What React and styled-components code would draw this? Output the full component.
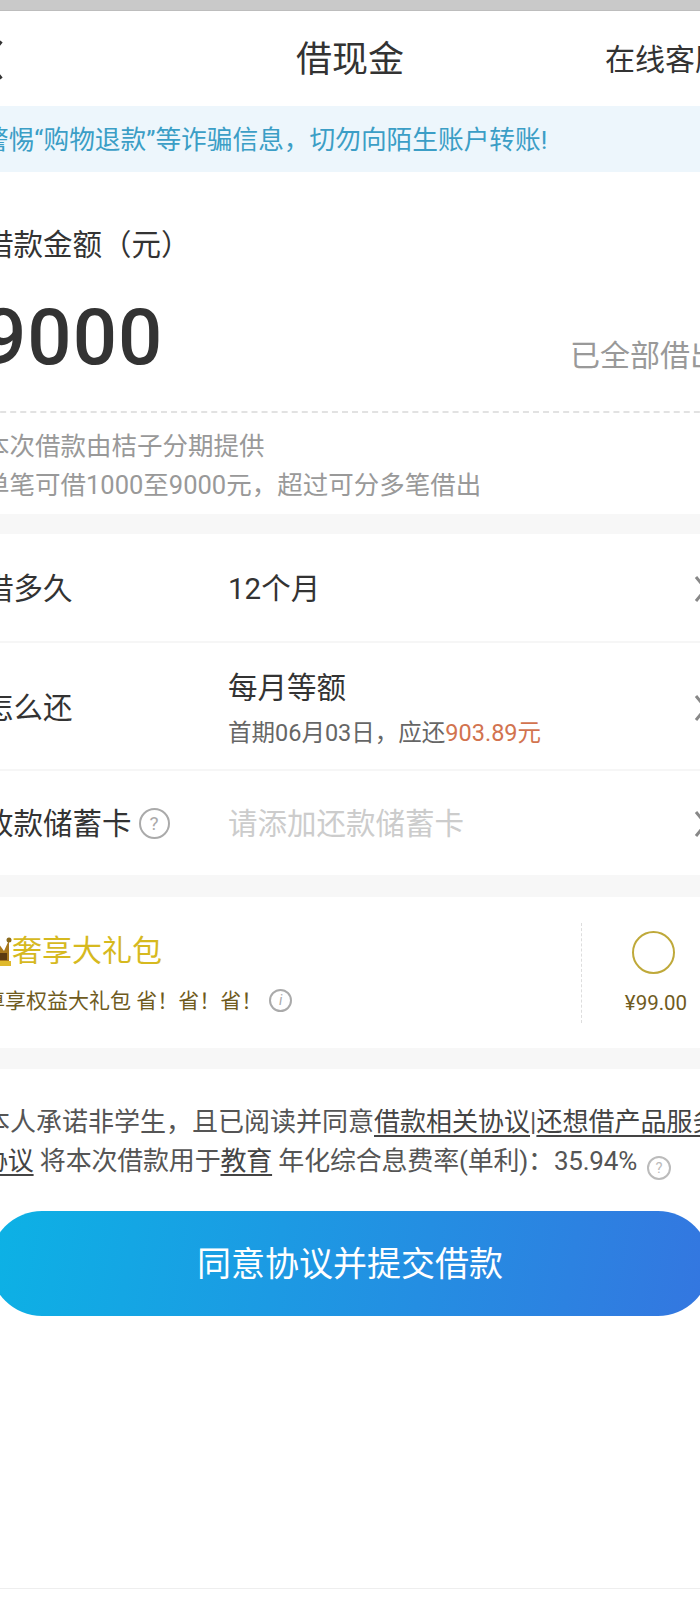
import React from 'react';
import styled, { createGlobalStyle } from 'styled-components';

const GlobalStyle = createGlobalStyle`
    html, body {
        margin: 0;
        padding: 0;
        background: #fff;
        overflow: hidden;
    }
    body {
        font-family: Roboto, "Noto Sans CJK SC", sans-serif;
        color: #333;
    }
`;

const Viewport = styled.div`
    width: 700px;
    height: 1603px;
    overflow: hidden;
`;

const Page = styled.div`
    width: 760px;
    margin-left: -30px;
`;

const StatusBar = styled.div`
    height: 10px;
    background: #c9c9c9;
    border-bottom: 1px solid #bdbdbd;
`;

const Nav = styled.div`
    display: grid;
    grid-template-columns: 1fr auto 1fr;
    align-items: center;
    height: 95px;
    padding: 2px 5px 0;
    box-sizing: border-box;
`;

const BackIcon = styled.svg`
    display: block;
    width: 19px;
    height: 40px;
    margin-left: 9px;
`;

const Title = styled.div`
    font-size: 36px;
    line-height: 50px;
    color: #333;
`;

const NavLink = styled.div`
    justify-self: end;
    font-size: 30px;
    line-height: 42px;
    color: #333;
`;

const Notice = styled.div`
    height: 66px;
    padding-left: 13px;
    background: #edf6fc;
    color: #3b9ec6;
    font-size: 25.7px;
    line-height: 68px;
    white-space: nowrap;
`;

const AmountSection = styled.div`
    padding: 52px 0 9px;
`;

const AmountLabel = styled.div`
    padding-left: 14px;
    font-size: 29.5px;
    line-height: 42px;
`;

const AmountRow = styled.div`
    display: flex;
    justify-content: space-between;
    align-items: center;
    height: 90px;
    margin-top: 27px;
    padding: 0 10px 0 12px;
`;

const AmountValue = styled.div`
    font-size: 78px;
    font-weight: 500;
    letter-spacing: 1px;
    line-height: 90px;
    color: #333;
`;

const AmountNote = styled.div`
    margin-top: 36px;
    font-size: 30px;
    line-height: 42px;
    color: #999;
`;

const DashedRule = styled.div`
    margin: 28px 0 14px;
    border-top: 2px dashed #e2e2e2;
`;

const Hint = styled.div`
    padding-left: 14px;
    font-size: 25.5px;
    line-height: 39px;
    color: #999;
`;

const Gap = styled.div`
    height: ${props => props.$height || 20}px;
    background: #f7f7f7;
`;

const Row = styled.div`
    display: flex;
    align-items: center;
    height: ${props => props.$height}px;
    padding: ${props => props.$top}px 22px 0 14px;
    box-sizing: border-box;
    border-bottom: ${props => props.$last ? 'none' : '2px solid #f6f6f6'};
`;

const RowLabel = styled.div`
    display: flex;
    align-items: center;
    gap: 7px;
    width: 244px;
    flex-shrink: 0;
    font-size: 29.5px;
    line-height: 42px;
    color: #333;
`;

const RowBody = styled.div`
    flex: 1;
`;

const RowValue = styled.div`
    font-size: 29.5px;
    line-height: 42px;
    color: ${props => props.$placeholder ? '#ccc' : '#333'};
`;

const RowSub = styled.div`
    margin-top: 7px;
    font-size: 23.5px;
    line-height: 34px;
    color: #666;
`;

const Money = styled.span`
    color: #d2734f;
`;

const Chevron = styled.svg`
    display: block;
    width: 14px;
    height: 28px;
    flex-shrink: 0;
`;

const Tip = styled.span`
    display: inline-flex;
    align-items: center;
    justify-content: center;
    width: ${props => props.$size}px;
    height: ${props => props.$size}px;
    box-sizing: border-box;
    border: 2px solid #aaa;
    border-radius: 50%;
    color: #aaa;
    font-size: ${props => props.$size * 0.62}px;
    line-height: 1;
    font-style: ${props => props.$italic ? 'italic' : 'normal'};
    flex-shrink: 0;
`;

const GiftCard = styled.div`
    display: flex;
    align-items: center;
    height: 151px;
    padding: 0 3px 0 14px;
    box-sizing: border-box;
`;

const GiftInfo = styled.div`
    flex: 1;
`;

const GiftTitle = styled.div`
    display: flex;
    align-items: center;
    font-size: 30px;
    line-height: 42px;
    color: #d6b91f;
`;

const CrownIcon = styled.svg`
    display: block;
    width: 28px;
    height: 32px;
    flex-shrink: 0;
`;

const GiftDesc = styled.div`
    display: flex;
    align-items: center;
    gap: 7px;
    margin-top: 14px;
    font-size: 21px;
    line-height: 30px;
    color: #6f5b1e;
`;

const GiftSide = styled.div`
    display: flex;
    flex-direction: column;
    align-items: center;
    width: 146px;
    height: 100px;
    padding: 8px 2px 0 0;
    box-sizing: border-box;
    border-left: 1px dashed #ddd;
`;

const Radio = styled.div`
    width: 43px;
    height: 43px;
    box-sizing: border-box;
    border: 2px solid #bfa93a;
    border-radius: 50%;
`;

const Price = styled.div`
    margin: 16px 0 0 5px;
    font-size: 20.5px;
    line-height: 26px;
    color: #6f5b1e;
`;

const Legal = styled.div`
    padding: 34px 10px 0 14px;
    font-size: 26px;
    line-height: 39px;
    color: #555;
`;

const LegalLine = styled.div`
    margin-left: ${props => props.$shift || 0}px;
    letter-spacing: ${props => props.$shift ? '-0.2px' : '0'};
    white-space: nowrap;
`;

const LegalLink = styled.span`
    text-decoration: underline;
    text-underline-offset: 4px;
    color: #444;
`;

const LegalTip = styled(Tip)`
    margin-left: 10px;
    vertical-align: -3px;
    border-color: #bbb;
    color: #bbb;
`;

const SubmitButton = styled.button`
    display: block;
    width: 720px;
    height: 105px;
    margin: 30px 20px 0;
    padding: 0;
    border: 0;
    border-radius: 52px;
    background: linear-gradient(100deg, #0cb2e5 0%, #3476e0 100%);
    color: #fff;
    font-family: inherit;
    font-size: 34px;
    line-height: 100px;
`;

const Footer = styled.div`
    height: 15px;
    margin-top: 272px;
    border-top: 1px solid #eee;
`;

const RowArrow = () => (
    <Chevron viewBox="0 0 14 28">
        <path d="M2 2 L12 14 L2 26" fill="none" stroke="#888" strokeWidth="3" />
    </Chevron>
);

const App = () => (
    <Viewport>
        <GlobalStyle />
        <Page>
            <StatusBar />
            <Nav>
                <BackIcon viewBox="0 0 19 40">
                    <path d="M17.5 1.5 L2 20 L17.5 38.5" fill="none" stroke="#333" strokeWidth="3" />
                </BackIcon>
                <Title>借现金</Title>
                <NavLink>在线客服</NavLink>
            </Nav>
            <Notice>警惕“购物退款”等诈骗信息&#xFF0C;切勿向陌生账户转账!</Notice>

            <AmountSection>
                <AmountLabel>借款金额&#xFF08;元&#xFF09;</AmountLabel>
                <AmountRow>
                    <AmountValue>9000</AmountValue>
                    <AmountNote>已全部借出</AmountNote>
                </AmountRow>
                <DashedRule />
                <Hint>本次借款由桔子分期提供</Hint>
                <Hint>单笔可借1000至9000元&#xFF0C;超过可分多笔借出</Hint>
            </AmountSection>
            <Gap />

            <Row $height={109} $top={3}>
                <RowLabel>借多久</RowLabel>
                <RowBody>
                    <RowValue>12个月</RowValue>
                </RowBody>
                <RowArrow />
            </Row>
            <Row $height={128} $top={4}>
                <RowLabel>怎么还</RowLabel>
                <RowBody>
                    <RowValue>每月等额</RowValue>
                    <RowSub>首期06月03日&#xFF0C;应还<Money>903.89元</Money></RowSub>
                </RowBody>
                <RowArrow />
            </Row>
            <Row $height={104} $top={1} $last>
                <RowLabel>收款储蓄卡<Tip $size={31}>?</Tip></RowLabel>
                <RowBody>
                    <RowValue $placeholder>请添加还款储蓄卡</RowValue>
                </RowBody>
                <RowArrow />
            </Row>
            <Gap $height={22} />

            <GiftCard>
                <GiftInfo>
                    <GiftTitle>
                        <CrownIcon viewBox="0 0 28 32">
                            <path d="M3 12 L9 17 L15 9 L20 16 L25 5 L25 26 L3 26 Z" fill="#a9781c" />
                            <circle cx="25" cy="5" r="2.5" fill="#8a6a1c" />
                            <rect x="5" y="18" width="18" height="7" fill="#5c3a10" />
                            <rect x="2" y="26" width="25" height="5" fill="#e0b92c" />
                        </CrownIcon>
                        奢享大礼包
                    </GiftTitle>
                    <GiftDesc>
                        <span>尊享权益大礼包 省&#xFF01;省&#xFF01;省&#xFF01;</span>
                        <Tip $size={23} $italic>i</Tip>
                    </GiftDesc>
                </GiftInfo>
                <GiftSide>
                    <Radio />
                    <Price>¥99.00</Price>
                </GiftSide>
            </GiftCard>
            <Gap $height={21} />

            <Legal>
                <LegalLine>
                    本人承诺非学生&#xFF0C;且已阅读并同意<LegalLink>借款相关协议</LegalLink>|<LegalLink>还想借产品服务</LegalLink>
                </LegalLine>
                <LegalLine $shift={-2}>
                    <LegalLink>协议</LegalLink> 将本次借款用于<LegalLink>教育</LegalLink> 年化综合息费率(单利)&#xFF1A;35.94%<LegalTip $size={24}>?</LegalTip>
                </LegalLine>
            </Legal>
            <SubmitButton>同意协议并提交借款</SubmitButton>
            <Footer />
        </Page>
    </Viewport>
);

export default App;
